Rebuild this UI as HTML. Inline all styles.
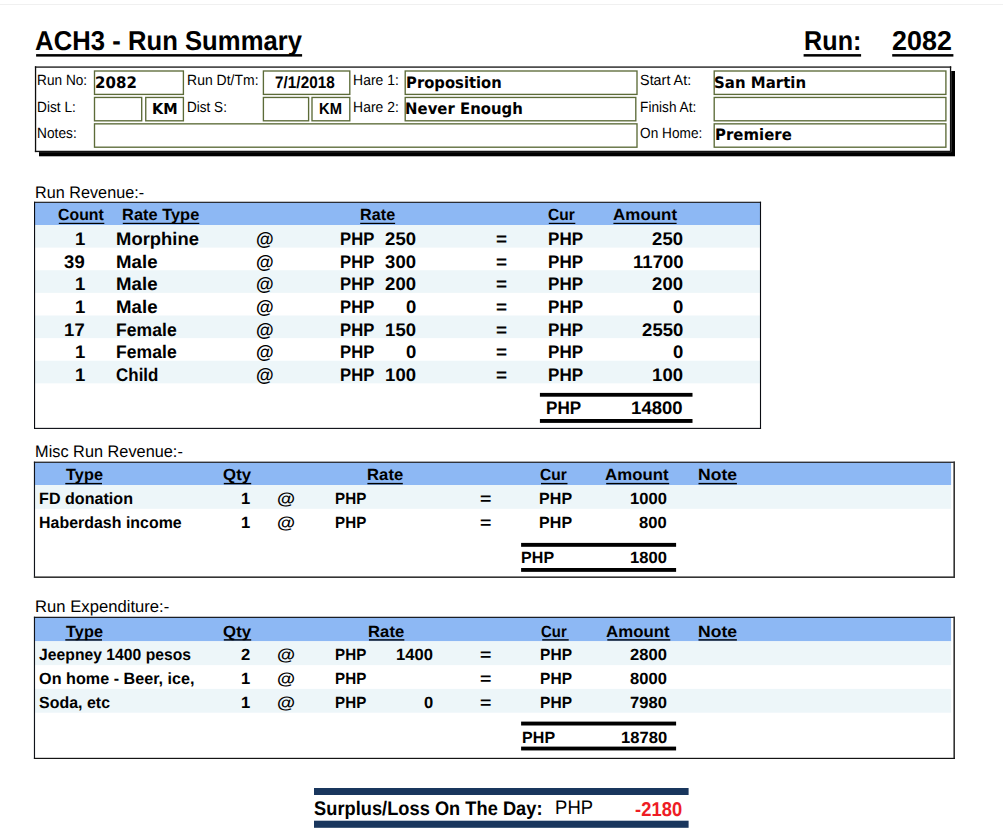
<!DOCTYPE html>
<html lang="en"><head><meta charset="utf-8"><title>ACH3 - Run Summary</title>
<style>
html,body{margin:0;padding:0;background:#fff;}
body{width:1003px;height:840px;position:relative;overflow:hidden;font-family:"Liberation Sans",sans-serif;}
svg{position:absolute;left:0;top:0;}
.t{position:absolute;white-space:pre;line-height:1;transform-origin:0 0;transform:skewX(0.3deg);}
.t i{display:inline-block;width:0;height:0;}
.L{font-family:"Liberation Sans",sans-serif;font-weight:400;}
.LB{font-family:"Liberation Sans",sans-serif;font-weight:700;}
.DB{font-family:"DejaVu Sans","Liberation Sans",sans-serif;font-weight:700;}
</style></head><body>
<svg width="1003" height="840" viewBox="0 0 1003 840">
<rect x="0" y="4" width="1003" height="1" fill="#f0f0f0"/>
<rect x="36.1" y="54.1" width="266" height="2.5" fill="#000"/>
<rect x="803.6" y="54.1" width="57.5" height="2.5" fill="#000"/>
<rect x="892.2" y="54.1" width="61.2" height="2.5" fill="#000"/>
<rect x="39" y="71" width="916" height="85.3" fill="#000"/>
<rect x="34.9" y="66.3" width="916.3" height="85.8" fill="#fff"/>
<rect x="34.9" y="66.3" width="916.3" height="1.6" fill="#3e3e3e"/>
<rect x="34.9" y="66.3" width="1.3" height="85.8" fill="#0c0c0c"/>
<rect x="949.9" y="66.3" width="1.3" height="85.8" fill="#111"/>
<rect x="34.9" y="150.75" width="916.3" height="1.35" fill="#111"/>
<rect x="94.5" y="71" width="88.9" height="23.4" fill="none" stroke="#5c6b38" stroke-width="1.35"/>
<rect x="263.4" y="71" width="86.4" height="23.4" fill="none" stroke="#5c6b38" stroke-width="1.35"/>
<rect x="405.2" y="71" width="231.8" height="23.4" fill="none" stroke="#5c6b38" stroke-width="1.35"/>
<rect x="714.2" y="71" width="231.7" height="23.4" fill="none" stroke="#5c6b38" stroke-width="1.35"/>
<rect x="94.5" y="97.45" width="47.2" height="23.35" fill="none" stroke="#5c6b38" stroke-width="1.35"/>
<rect x="145.75" y="97.45" width="37.65" height="23.35" fill="none" stroke="#5c6b38" stroke-width="1.35"/>
<rect x="263.4" y="97.45" width="45.2" height="23.35" fill="none" stroke="#5c6b38" stroke-width="1.35"/>
<rect x="312" y="97.45" width="37.8" height="23.35" fill="none" stroke="#5c6b38" stroke-width="1.35"/>
<rect x="405.2" y="97.45" width="230.6" height="23.35" fill="none" stroke="#5c6b38" stroke-width="1.35"/>
<rect x="714.2" y="97.45" width="231.7" height="23.35" fill="none" stroke="#5c6b38" stroke-width="1.35"/>
<rect x="94.5" y="123.85" width="542.5" height="23.35" fill="none" stroke="#5c6b38" stroke-width="1.35"/>
<rect x="714.2" y="123.85" width="231.7" height="23.35" fill="none" stroke="#5c6b38" stroke-width="1.35"/>
<rect x="35" y="202.8" width="725.2" height="22.2" fill="#8db8f4"/>
<rect x="35" y="225" width="725.2" height="22.62" fill="#edf6f9"/>
<rect x="35" y="270.24" width="725.2" height="22.62" fill="#edf6f9"/>
<rect x="35" y="315.48" width="725.2" height="22.62" fill="#edf6f9"/>
<rect x="35" y="360.72" width="725.2" height="22.62" fill="#edf6f9"/>
<rect x="34" y="201.75" width="727.05" height="1.1" fill="#0a0c12"/>
<rect x="34" y="201.75" width="1.1" height="227.2" fill="#0a0c12"/>
<rect x="759.95" y="201.75" width="1.1" height="227.2" fill="#0a0c12"/>
<rect x="34" y="427.85" width="727.05" height="1.1" fill="#0a0c12"/>
<rect x="539.9" y="392.9" width="152.6" height="3.8" fill="#000"/>
<rect x="539.9" y="419" width="152.6" height="3.9" fill="#000"/>
<rect x="58.8" y="222.8" width="45.5" height="1.2" fill="#000"/>
<rect x="122.8" y="222.8" width="76.5" height="1.2" fill="#000"/>
<rect x="360.2" y="222.8" width="34.9" height="1.2" fill="#000"/>
<rect x="548.8" y="222.8" width="26.5" height="1.2" fill="#000"/>
<rect x="613.4" y="222.8" width="63.2" height="1.2" fill="#000"/>
<rect x="35" y="462.8" width="916.1" height="22.2" fill="#8db8f4"/>
<rect x="35" y="485" width="916.1" height="23.8" fill="#edf6f9"/>
<rect x="65.3" y="482.9" width="36.7" height="1.4" fill="#000"/>
<rect x="223.8" y="482.9" width="27.4" height="1.4" fill="#000"/>
<rect x="367.4" y="482.9" width="35.4" height="1.4" fill="#000"/>
<rect x="541" y="482.9" width="26.5" height="1.4" fill="#000"/>
<rect x="606.2" y="482.9" width="63" height="1.4" fill="#000"/>
<rect x="698.5" y="482.9" width="38.4" height="1.4" fill="#000"/>
<rect x="33.9" y="461.65" width="921.1" height="1.2" fill="#10131a"/>
<rect x="33.9" y="461.65" width="1.15" height="116.35" fill="#10131a"/>
<rect x="953.4" y="461.65" width="1.6" height="116.35" fill="#333"/>
<rect x="33.9" y="576.4" width="921.1" height="1.6" fill="#333"/>
<rect x="35" y="617.9" width="916.1" height="23.4" fill="#8db8f4"/>
<rect x="35" y="641.3" width="916.1" height="23.8" fill="#edf6f9"/>
<rect x="35" y="688.9" width="916.1" height="23.8" fill="#edf6f9"/>
<rect x="65.3" y="639.2" width="36.7" height="1.4" fill="#000"/>
<rect x="223.8" y="639.2" width="27.4" height="1.4" fill="#000"/>
<rect x="368.94" y="639.2" width="35.4" height="1.4" fill="#000"/>
<rect x="542.21" y="639.2" width="26.5" height="1.4" fill="#000"/>
<rect x="607.3" y="639.2" width="63" height="1.4" fill="#000"/>
<rect x="698.5" y="639.2" width="38.4" height="1.4" fill="#000"/>
<rect x="33.9" y="616.75" width="921.1" height="1.2" fill="#10131a"/>
<rect x="33.9" y="616.75" width="1.15" height="142.25" fill="#10131a"/>
<rect x="953.4" y="616.75" width="1.6" height="142.25" fill="#333"/>
<rect x="33.9" y="757.8" width="921.1" height="1.2" fill="#141414"/>
<rect x="521.1" y="542.9" width="155" height="3.9" fill="#000"/>
<rect x="521.1" y="568" width="155" height="3.85" fill="#000"/>
<rect x="521.1" y="721.6" width="155" height="3.9" fill="#000"/>
<rect x="521.1" y="746.6" width="155" height="3.85" fill="#000"/>
<rect x="314" y="788" width="374.6" height="7" fill="#19365d"/>
<rect x="314" y="820.7" width="374.6" height="7.1" fill="#19365d"/>
</svg>
<span class="t LB" style="left:35.26px;top:27.00px;font-size:27.3px;transform:scaleX(0.9411) skewX(0.3deg)">ACH3 - Run Summary</span>
<span class="t LB" style="left:803.76px;top:27.00px;font-size:27.3px;transform:scaleX(0.9224) skewX(0.3deg)">Run:</span>
<span class="t LB" style="left:892.31px;top:27.00px;font-size:27.3px;transform:scaleX(0.9864) skewX(0.3deg)">2082</span>
<span class="t L" style="left:37.28px;top:73.00px;font-size:14.8px;transform:scaleX(0.9231) skewX(0.3deg)">Run No:</span>
<span class="t L" style="left:37.28px;top:100.00px;font-size:14.8px;transform:scaleX(0.9250) skewX(0.3deg)">Dist L:</span>
<span class="t L" style="left:37.27px;top:126.00px;font-size:14.8px;transform:scaleX(0.9268) skewX(0.3deg)">Notes:</span>
<span class="t L" style="left:187.05px;top:73.00px;font-size:14.8px;transform:scaleX(0.9452) skewX(0.3deg)">Run Dt/Tm:</span>
<span class="t L" style="left:186.59px;top:100.00px;font-size:14.8px;transform:scaleX(0.9146) skewX(0.3deg)">Dist S:</span>
<span class="t L" style="left:352.66px;top:73.00px;font-size:14.8px;transform:scaleX(0.9435) skewX(0.3deg)">Hare 1:</span>
<span class="t L" style="left:352.66px;top:100.00px;font-size:14.8px;transform:scaleX(0.9435) skewX(0.3deg)">Hare 2:</span>
<span class="t L" style="left:640.03px;top:73.00px;font-size:14.8px;transform:scaleX(0.9700) skewX(0.3deg)">Start At:</span>
<span class="t L" style="left:640.08px;top:100.00px;font-size:14.8px;transform:scaleX(0.9237) skewX(0.3deg)">Finish At:</span>
<span class="t L" style="left:640.08px;top:126.00px;font-size:14.8px;transform:scaleX(0.9231) skewX(0.3deg)">On Home:</span>
<span class="t DB" style="left:95.45px;top:75.00px;font-size:15.8px;transform:scaleX(0.9524) skewX(0.3deg)">2082</span>
<span class="t DB" style="left:151.53px;top:102.00px;font-size:15px;transform:scaleX(0.9667) skewX(0.3deg)">KM</span>
<span class="t LB" style="left:275.28px;top:75.00px;font-size:16.7px;transform:scaleX(0.9187) skewX(0.3deg)">7/1/2018</span>
<span class="t LB" style="left:319.07px;top:101.00px;font-size:15.9px;transform:scaleX(0.9304) skewX(0.3deg)">KM</span>
<span class="t DB" style="left:406.26px;top:75.00px;font-size:15.8px;transform:scaleX(0.9360) skewX(0.3deg)">Proposition</span>
<span class="t DB" style="left:405.46px;top:101.00px;font-size:15.8px;transform:scaleX(0.9431) skewX(0.3deg)">Never Enough</span>
<span class="t DB" style="left:713.85px;top:75.00px;font-size:15.8px;transform:scaleX(0.9474) skewX(0.3deg)">San Martin</span>
<span class="t DB" style="left:714.55px;top:127.00px;font-size:15.8px;transform:scaleX(0.9450) skewX(0.3deg)">Premiere</span>
<span class="t L" style="left:34.93px;top:185.00px;font-size:16.7px;transform:scaleX(0.9712) skewX(0.3deg)">Run Revenue:-</span>
<span class="t L" style="left:35.02px;top:444.00px;font-size:16.7px;transform:scaleX(0.9773) skewX(0.3deg)">Misc Run Revenue:-</span>
<span class="t L" style="left:34.90px;top:599.00px;font-size:16.7px;transform:scaleX(0.9977) skewX(0.3deg)">Run Expenditure:-</span>
<span class="t LB" style="left:57.92px;top:206.00px;font-size:16.2px;transform:scaleX(0.9783) skewX(0.3deg)">Count</span>
<span class="t LB" style="left:121.99px;top:206.00px;font-size:16.2px;transform:scaleX(1.0133) skewX(0.3deg)">Rate Type</span>
<span class="t LB" style="left:360.00px;top:206.00px;font-size:16.2px;transform:scaleX(1.0000) skewX(0.3deg)">Rate</span>
<span class="t LB" style="left:548.04px;top:206.00px;font-size:16.2px;transform:scaleX(0.9630) skewX(0.3deg)">Cur</span>
<span class="t LB" style="left:612.55px;top:206.00px;font-size:16.2px;transform:scaleX(1.0467) skewX(0.3deg)">Amount</span>
<span class="t LB" style="left:74.50px;top:230.00px;font-size:18.2px;transform:scaleX(1.0200) skewX(0.3deg)">1</span>
<span class="t LB" style="left:115.99px;top:230.00px;font-size:18.2px;transform:scaleX(1.0125) skewX(0.3deg)">Morphine</span>
<span class="t LB" style="left:256.00px;top:230.00px;font-size:18.2px;transform:scaleX(1.0000) skewX(0.3deg)">@</span>
<span class="t LB" style="left:340.08px;top:230.00px;font-size:18.2px;transform:scaleX(0.9167) skewX(0.3deg)">PHP</span>
<span class="t LB" style="left:385.40px;top:230.00px;font-size:18.2px;transform:scaleX(1.0200) skewX(0.3deg)">250</span>
<span class="t LB" style="left:495.56px;top:230.00px;font-size:18.2px;transform:scaleX(1.0444) skewX(0.3deg)">=</span>
<span class="t LB" style="left:547.66px;top:230.00px;font-size:18.2px;transform:scaleX(0.9389) skewX(0.3deg)">PHP</span>
<span class="t LB" style="left:652.40px;top:230.00px;font-size:18.2px;transform:scaleX(1.0200) skewX(0.3deg)">250</span>
<span class="t LB" style="left:64.30px;top:253.00px;font-size:18.2px;transform:scaleX(1.0200) skewX(0.3deg)">39</span>
<span class="t LB" style="left:115.97px;top:253.00px;font-size:18.2px;transform:scaleX(1.0256) skewX(0.3deg)">Male</span>
<span class="t LB" style="left:256.00px;top:253.00px;font-size:18.2px;transform:scaleX(1.0000) skewX(0.3deg)">@</span>
<span class="t LB" style="left:340.08px;top:253.00px;font-size:18.2px;transform:scaleX(0.9167) skewX(0.3deg)">PHP</span>
<span class="t LB" style="left:385.40px;top:253.00px;font-size:18.2px;transform:scaleX(1.0200) skewX(0.3deg)">300</span>
<span class="t LB" style="left:495.56px;top:253.00px;font-size:18.2px;transform:scaleX(1.0444) skewX(0.3deg)">=</span>
<span class="t LB" style="left:547.66px;top:253.00px;font-size:18.2px;transform:scaleX(0.9389) skewX(0.3deg)">PHP</span>
<span class="t LB" style="left:633.02px;top:253.00px;font-size:18.2px;transform:scaleX(1.0200) skewX(0.3deg)">11700</span>
<span class="t LB" style="left:74.50px;top:275.00px;font-size:18.2px;transform:scaleX(1.0200) skewX(0.3deg)">1</span>
<span class="t LB" style="left:115.97px;top:275.00px;font-size:18.2px;transform:scaleX(1.0256) skewX(0.3deg)">Male</span>
<span class="t LB" style="left:256.00px;top:275.00px;font-size:18.2px;transform:scaleX(1.0000) skewX(0.3deg)">@</span>
<span class="t LB" style="left:340.08px;top:275.00px;font-size:18.2px;transform:scaleX(0.9167) skewX(0.3deg)">PHP</span>
<span class="t LB" style="left:385.40px;top:275.00px;font-size:18.2px;transform:scaleX(1.0200) skewX(0.3deg)">200</span>
<span class="t LB" style="left:495.56px;top:275.00px;font-size:18.2px;transform:scaleX(1.0444) skewX(0.3deg)">=</span>
<span class="t LB" style="left:547.66px;top:275.00px;font-size:18.2px;transform:scaleX(0.9389) skewX(0.3deg)">PHP</span>
<span class="t LB" style="left:652.40px;top:275.00px;font-size:18.2px;transform:scaleX(1.0200) skewX(0.3deg)">200</span>
<span class="t LB" style="left:74.50px;top:298.00px;font-size:18.2px;transform:scaleX(1.0200) skewX(0.3deg)">1</span>
<span class="t LB" style="left:115.97px;top:298.00px;font-size:18.2px;transform:scaleX(1.0256) skewX(0.3deg)">Male</span>
<span class="t LB" style="left:256.00px;top:298.00px;font-size:18.2px;transform:scaleX(1.0000) skewX(0.3deg)">@</span>
<span class="t LB" style="left:340.08px;top:298.00px;font-size:18.2px;transform:scaleX(0.9167) skewX(0.3deg)">PHP</span>
<span class="t LB" style="left:405.80px;top:298.00px;font-size:18.2px;transform:scaleX(1.0200) skewX(0.3deg)">0</span>
<span class="t LB" style="left:495.56px;top:298.00px;font-size:18.2px;transform:scaleX(1.0444) skewX(0.3deg)">=</span>
<span class="t LB" style="left:547.66px;top:298.00px;font-size:18.2px;transform:scaleX(0.9389) skewX(0.3deg)">PHP</span>
<span class="t LB" style="left:672.80px;top:298.00px;font-size:18.2px;transform:scaleX(1.0200) skewX(0.3deg)">0</span>
<span class="t LB" style="left:64.30px;top:321.00px;font-size:18.2px;transform:scaleX(1.0200) skewX(0.3deg)">17</span>
<span class="t LB" style="left:116.03px;top:321.00px;font-size:18.2px;transform:scaleX(0.9672) skewX(0.3deg)">Female</span>
<span class="t LB" style="left:256.00px;top:321.00px;font-size:18.2px;transform:scaleX(1.0000) skewX(0.3deg)">@</span>
<span class="t LB" style="left:340.08px;top:321.00px;font-size:18.2px;transform:scaleX(0.9167) skewX(0.3deg)">PHP</span>
<span class="t LB" style="left:385.40px;top:321.00px;font-size:18.2px;transform:scaleX(1.0200) skewX(0.3deg)">150</span>
<span class="t LB" style="left:495.56px;top:321.00px;font-size:18.2px;transform:scaleX(1.0444) skewX(0.3deg)">=</span>
<span class="t LB" style="left:547.66px;top:321.00px;font-size:18.2px;transform:scaleX(0.9389) skewX(0.3deg)">PHP</span>
<span class="t LB" style="left:642.20px;top:321.00px;font-size:18.2px;transform:scaleX(1.0200) skewX(0.3deg)">2550</span>
<span class="t LB" style="left:74.50px;top:343.00px;font-size:18.2px;transform:scaleX(1.0200) skewX(0.3deg)">1</span>
<span class="t LB" style="left:116.03px;top:343.00px;font-size:18.2px;transform:scaleX(0.9672) skewX(0.3deg)">Female</span>
<span class="t LB" style="left:256.00px;top:343.00px;font-size:18.2px;transform:scaleX(1.0000) skewX(0.3deg)">@</span>
<span class="t LB" style="left:340.08px;top:343.00px;font-size:18.2px;transform:scaleX(0.9167) skewX(0.3deg)">PHP</span>
<span class="t LB" style="left:405.80px;top:343.00px;font-size:18.2px;transform:scaleX(1.0200) skewX(0.3deg)">0</span>
<span class="t LB" style="left:495.56px;top:343.00px;font-size:18.2px;transform:scaleX(1.0444) skewX(0.3deg)">=</span>
<span class="t LB" style="left:547.66px;top:343.00px;font-size:18.2px;transform:scaleX(0.9389) skewX(0.3deg)">PHP</span>
<span class="t LB" style="left:672.80px;top:343.00px;font-size:18.2px;transform:scaleX(1.0200) skewX(0.3deg)">0</span>
<span class="t LB" style="left:74.50px;top:366.00px;font-size:18.2px;transform:scaleX(1.0200) skewX(0.3deg)">1</span>
<span class="t LB" style="left:116.07px;top:366.00px;font-size:18.2px;transform:scaleX(0.9318) skewX(0.3deg)">Child</span>
<span class="t LB" style="left:256.00px;top:366.00px;font-size:18.2px;transform:scaleX(1.0000) skewX(0.3deg)">@</span>
<span class="t LB" style="left:340.08px;top:366.00px;font-size:18.2px;transform:scaleX(0.9167) skewX(0.3deg)">PHP</span>
<span class="t LB" style="left:385.40px;top:366.00px;font-size:18.2px;transform:scaleX(1.0200) skewX(0.3deg)">100</span>
<span class="t LB" style="left:495.56px;top:366.00px;font-size:18.2px;transform:scaleX(1.0444) skewX(0.3deg)">=</span>
<span class="t LB" style="left:547.66px;top:366.00px;font-size:18.2px;transform:scaleX(0.9389) skewX(0.3deg)">PHP</span>
<span class="t LB" style="left:652.40px;top:366.00px;font-size:18.2px;transform:scaleX(1.0200) skewX(0.3deg)">100</span>
<span class="t LB" style="left:546.06px;top:399.00px;font-size:18.2px;transform:scaleX(0.9417) skewX(0.3deg)">PHP</span>
<span class="t LB" style="left:631.00px;top:399.00px;font-size:18.2px;transform:scaleX(1.0200) skewX(0.3deg)">14800</span>
<span class="t LB" style="left:65.50px;top:466.00px;font-size:16.2px;transform:scaleX(1.0083) skewX(0.3deg)">Type</span>
<span class="t LB" style="left:222.96px;top:466.00px;font-size:16.2px;transform:scaleX(1.0385) skewX(0.3deg)">Qty</span>
<span class="t LB" style="left:366.57px;top:466.00px;font-size:16.2px;transform:scaleX(1.0294) skewX(0.3deg)">Rate</span>
<span class="t LB" style="left:540.24px;top:466.00px;font-size:16.2px;transform:scaleX(0.9630) skewX(0.3deg)">Cur</span>
<span class="t LB" style="left:605.36px;top:466.00px;font-size:16.2px;transform:scaleX(1.0400) skewX(0.3deg)">Amount</span>
<span class="t LB" style="left:697.61px;top:466.00px;font-size:16.2px;transform:scaleX(1.0857) skewX(0.3deg)">Note</span>
<span class="t LB" style="left:38.61px;top:490.00px;font-size:16.3px;transform:scaleX(0.9892) skewX(0.3deg)">FD donation</span>
<span class="t LB" style="left:240.82px;top:490.00px;font-size:16.3px;transform:scaleX(1.0200) skewX(0.3deg)">1</span>
<span class="t LB" style="left:277.06px;top:490.00px;font-size:16.3px;transform:scaleX(1.1429) skewX(0.3deg)">@</span>
<span class="t LB" style="left:334.67px;top:490.00px;font-size:16.3px;transform:scaleX(0.9344) skewX(0.3deg)">PHP</span>
<span class="t LB" style="left:480.20px;top:490.00px;font-size:16.3px;transform:scaleX(1.2000) skewX(0.3deg)">=</span>
<span class="t LB" style="left:538.51px;top:490.00px;font-size:16.3px;transform:scaleX(0.9875) skewX(0.3deg)">PHP</span>
<span class="t LB" style="left:629.78px;top:490.00px;font-size:16.3px;transform:scaleX(1.0200) skewX(0.3deg)">1000</span>
<span class="t LB" style="left:38.62px;top:514.00px;font-size:16.3px;transform:scaleX(0.9792) skewX(0.3deg)">Haberdash income</span>
<span class="t LB" style="left:240.82px;top:514.00px;font-size:16.3px;transform:scaleX(1.0200) skewX(0.3deg)">1</span>
<span class="t LB" style="left:277.06px;top:514.00px;font-size:16.3px;transform:scaleX(1.1429) skewX(0.3deg)">@</span>
<span class="t LB" style="left:334.67px;top:514.00px;font-size:16.3px;transform:scaleX(0.9344) skewX(0.3deg)">PHP</span>
<span class="t LB" style="left:480.20px;top:514.00px;font-size:16.3px;transform:scaleX(1.2000) skewX(0.3deg)">=</span>
<span class="t LB" style="left:538.51px;top:514.00px;font-size:16.3px;transform:scaleX(0.9875) skewX(0.3deg)">PHP</span>
<span class="t LB" style="left:638.96px;top:514.00px;font-size:16.3px;transform:scaleX(1.0200) skewX(0.3deg)">800</span>
<span class="t LB" style="left:520.91px;top:549.00px;font-size:16.3px;transform:scaleX(0.9875) skewX(0.3deg)">PHP</span>
<span class="t LB" style="left:629.68px;top:549.00px;font-size:16.3px;transform:scaleX(1.0200) skewX(0.3deg)">1800</span>
<span class="t LB" style="left:65.50px;top:623.00px;font-size:16.2px;transform:scaleX(1.0083) skewX(0.3deg)">Type</span>
<span class="t LB" style="left:222.96px;top:623.00px;font-size:16.2px;transform:scaleX(1.0385) skewX(0.3deg)">Qty</span>
<span class="t LB" style="left:368.11px;top:623.00px;font-size:16.2px;transform:scaleX(1.0294) skewX(0.3deg)">Rate</span>
<span class="t LB" style="left:541.48px;top:623.00px;font-size:16.2px;transform:scaleX(0.9222) skewX(0.3deg)">Cur</span>
<span class="t LB" style="left:606.46px;top:623.00px;font-size:16.2px;transform:scaleX(1.0400) skewX(0.3deg)">Amount</span>
<span class="t LB" style="left:697.61px;top:623.00px;font-size:16.2px;transform:scaleX(1.0857) skewX(0.3deg)">Note</span>
<span class="t LB" style="left:38.60px;top:646.00px;font-size:16.3px;transform:scaleX(0.9650) skewX(0.3deg)">Jeepney 1400 pesos</span>
<span class="t LB" style="left:240.82px;top:646.00px;font-size:16.3px;transform:scaleX(1.0200) skewX(0.3deg)">2</span>
<span class="t LB" style="left:277.06px;top:646.00px;font-size:16.3px;transform:scaleX(1.1429) skewX(0.3deg)">@</span>
<span class="t LB" style="left:334.67px;top:646.00px;font-size:16.3px;transform:scaleX(0.9344) skewX(0.3deg)">PHP</span>
<span class="t LB" style="left:396.08px;top:646.00px;font-size:16.3px;transform:scaleX(1.0200) skewX(0.3deg)">1400</span>
<span class="t LB" style="left:480.20px;top:646.00px;font-size:16.3px;transform:scaleX(1.2000) skewX(0.3deg)">=</span>
<span class="t LB" style="left:539.54px;top:646.00px;font-size:16.3px;transform:scaleX(0.9563) skewX(0.3deg)">PHP</span>
<span class="t LB" style="left:629.78px;top:646.00px;font-size:16.3px;transform:scaleX(1.0200) skewX(0.3deg)">2800</span>
<span class="t LB" style="left:38.61px;top:670.00px;font-size:16.3px;transform:scaleX(0.9935) skewX(0.3deg)">On home - Beer, ice,</span>
<span class="t LB" style="left:240.82px;top:670.00px;font-size:16.3px;transform:scaleX(1.0200) skewX(0.3deg)">1</span>
<span class="t LB" style="left:277.06px;top:670.00px;font-size:16.3px;transform:scaleX(1.1429) skewX(0.3deg)">@</span>
<span class="t LB" style="left:334.67px;top:670.00px;font-size:16.3px;transform:scaleX(0.9344) skewX(0.3deg)">PHP</span>
<span class="t LB" style="left:480.20px;top:670.00px;font-size:16.3px;transform:scaleX(1.2000) skewX(0.3deg)">=</span>
<span class="t LB" style="left:539.54px;top:670.00px;font-size:16.3px;transform:scaleX(0.9563) skewX(0.3deg)">PHP</span>
<span class="t LB" style="left:629.78px;top:670.00px;font-size:16.3px;transform:scaleX(1.0200) skewX(0.3deg)">8000</span>
<span class="t LB" style="left:38.62px;top:694.00px;font-size:16.3px;transform:scaleX(0.9803) skewX(0.3deg)">Soda, etc</span>
<span class="t LB" style="left:240.82px;top:694.00px;font-size:16.3px;transform:scaleX(1.0200) skewX(0.3deg)">1</span>
<span class="t LB" style="left:277.06px;top:694.00px;font-size:16.3px;transform:scaleX(1.1429) skewX(0.3deg)">@</span>
<span class="t LB" style="left:334.67px;top:694.00px;font-size:16.3px;transform:scaleX(0.9344) skewX(0.3deg)">PHP</span>
<span class="t LB" style="left:423.62px;top:694.00px;font-size:16.3px;transform:scaleX(1.0200) skewX(0.3deg)">0</span>
<span class="t LB" style="left:480.20px;top:694.00px;font-size:16.3px;transform:scaleX(1.2000) skewX(0.3deg)">=</span>
<span class="t LB" style="left:539.54px;top:694.00px;font-size:16.3px;transform:scaleX(0.9563) skewX(0.3deg)">PHP</span>
<span class="t LB" style="left:629.78px;top:694.00px;font-size:16.3px;transform:scaleX(1.0200) skewX(0.3deg)">7980</span>
<span class="t LB" style="left:522.01px;top:729.00px;font-size:16.3px;transform:scaleX(0.9875) skewX(0.3deg)">PHP</span>
<span class="t LB" style="left:620.50px;top:729.00px;font-size:16.3px;transform:scaleX(1.0200) skewX(0.3deg)">18780</span>
<span class="t LB" style="left:313.87px;top:799.00px;font-size:19.6px;transform:scaleX(0.9326) skewX(0.3deg)">Surplus/Loss On The Day:</span>
<span class="t L" style="left:554.76px;top:798.00px;font-size:19.6px;transform:scaleX(0.9447) skewX(0.3deg)">PHP</span>
<span class="t LB" style="left:635.38px;top:800.00px;font-size:19.9px;color:#ee1c25;transform:scaleX(0.9245) skewX(0.3deg)">-2180</span>
</body></html>
